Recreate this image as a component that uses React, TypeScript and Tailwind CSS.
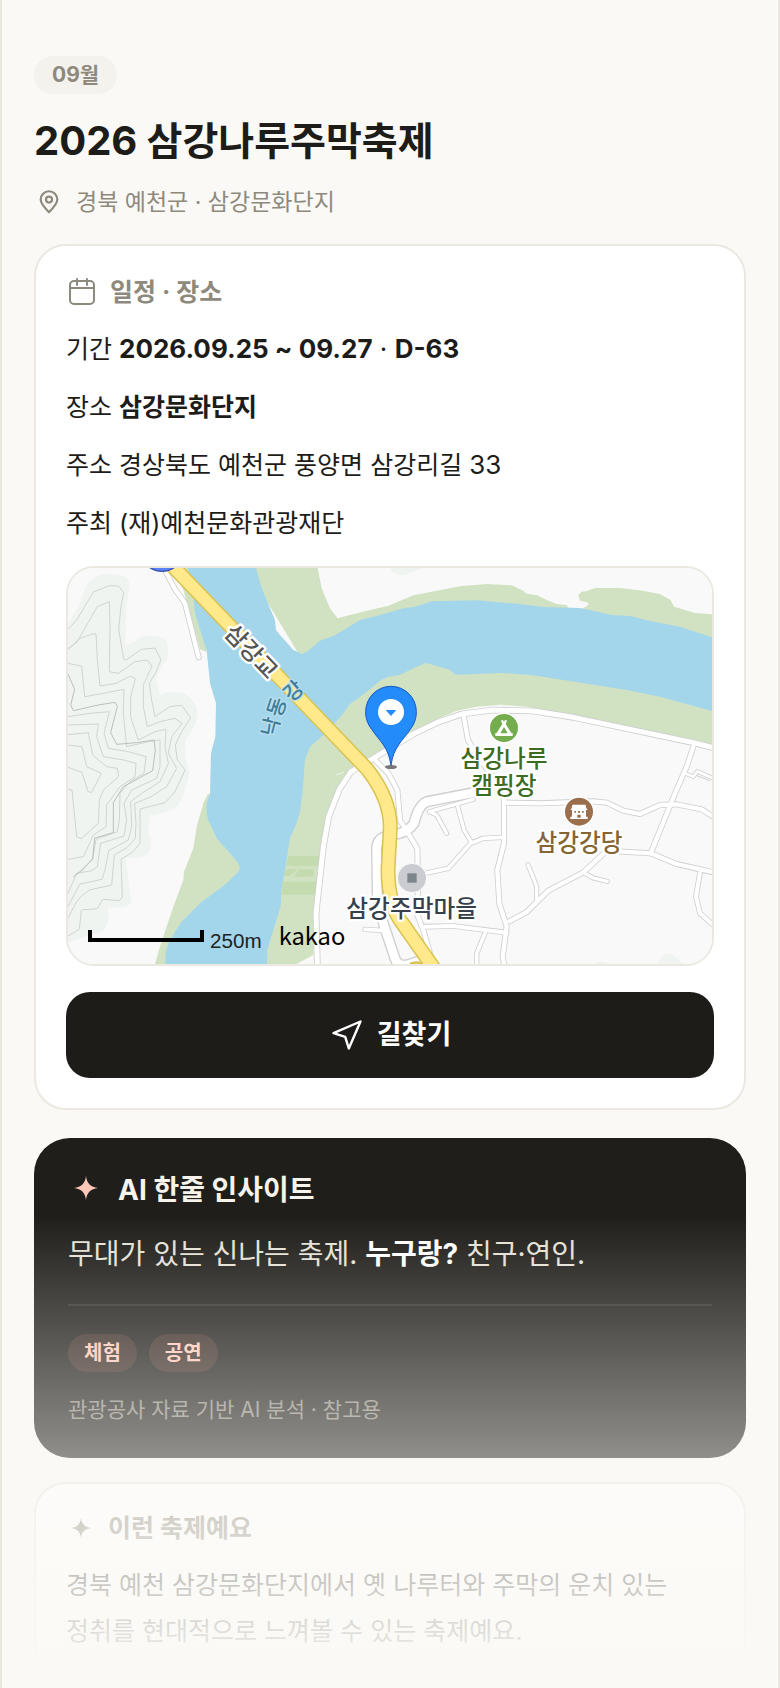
import React from "react";

const GREEN = "#d1e2c2";
const WATER = "#a4d6eb";

const contours = [
  "M24 208 L50 180 L100 96 L148 77 L176 78 L191 98 L183 140 L176 208 L191 297 L198 300 L245 268 L285 264 L303 300 L286 340 L268 370 L275 420 L285 470 L330 440 L365 436 L392 474 L365 515 L346 555 L352 600 L375 630 L345 695 L315 728 L240 747 L240 850 L218 876 L183 898 L187 1012 L178 1022 L128 1018 L112 1046 L64 1050 L58 1108 L24 1128",
  "M24 266 L50 248 L112 140 L148 125 L150 200 L148 335 L175 340 L225 305 L262 300 L276 318 L250 375 L250 440 L262 500 L300 485 L345 475 L366 490 L335 530 L325 580 L350 625 L320 680 L270 712 L224 730 L228 790 L226 835 L202 862 L163 885 L155 975 L88 990 L62 1010 L48 1028 L24 1075",
  "M24 268 L60 235 L98 222 L108 222 L112 300 L120 378 L168 370 L212 348 L226 356 L212 410 L212 470 L235 540 L285 515 L318 508 L315 560 L325 610 L300 665 L245 700 L212 725 L215 800 L205 840 L146 872 L135 930 L126 958 L60 972 L24 1040",
  "M24 310 L65 318 L74 410 L130 400 L192 388 L190 460 L200 560 L265 545 L300 540 L300 620 L290 655 L215 690 L192 730 L200 780 L192 828 L122 850 L112 920 L95 932 L50 940 L24 1000",
  "M24 470 L90 460 L148 455 L132 520 L145 565 L205 575 L258 590 L252 640 L210 665 L180 700 L178 780 L172 815 L108 838 L98 895 L64 935",
  "M24 495 L115 492 L110 530 L130 590 L190 600 L228 610 L225 650 L180 680 L140 735 L138 800 L100 825 L70 890 L24 898",
  "M24 524 L85 518 L98 585 L140 620 L172 625 L176 650 L130 690 L118 720 L115 790 L64 836 L50 830 L36 690 L24 688",
  "M24 555 L66 560 L80 620 L124 640 L95 697 L84 695 L66 637 L24 622",
];

const roads: { d: string; w: number }[] = [
  { d: "M318 36 L345 88 L375 130 L416 292", w: 13 },
  { d: "M772 1212 L768 1060 L790 860 L806 770 L838 688 L872 636 L945 592 L1060 522 L1130 488 L1205 462 L1300 450 L1420 453 L1540 472 L1900 548 L1956 562", w: 15 },
  { d: "M1210 464 L1224 540 L1262 605 L1300 650 L1332 718 L1332 850 L1312 930 L1318 1030 L1340 1100 L1328 1190 L1332 1212", w: 13 },
  { d: "M1332 728 L1440 730 L1600 724 L1640 728 L1690 752 L1740 762 L1800 735 L1850 733 L1925 748 L1956 768", w: 13 },
  { d: "M1900 560 L1880 620 L1845 700 L1772 880", w: 13 },
  { d: "M1348 1084 L1400 1056 L1465 992 L1570 937 L1640 872 L1772 880 L1850 912 L1956 936", w: 13 },
  { d: "M1570 937 L1600 954 L1642 964", w: 10 },
  { d: "M1404 914 L1430 980 L1430 1018", w: 10 },
  { d: "M1920 938 L1908 1010 L1920 1060 L1956 1092", w: 12 },
  { d: "M1875 640 L1900 650 L1912 634 L1956 654", w: 8 },
  { d: "M945 600 L985 640 L1012 690 L1020 780 L1072 865 L1074 1000 L1066 1050 L1090 1110 L1110 1180 L1112 1212", w: 13 },
  { d: "M1095 1100 L1180 1098 L1340 1118", w: 12 },
  { d: "M1275 1120 L1250 1180 L1250 1212", w: 11 },
  { d: "M1085 942 L1165 925 L1232 850 L1270 835 L1325 832", w: 11 },
  { d: "M1240 718 L1108 755 L1130 765 L1160 820", w: 10 },
  { d: "M1192 735 L1212 810 L1235 848", w: 10 },
  { d: "M915 1108 L975 1112", w: 11 },
];

const MapArt = () => (
  <svg
    viewBox="24 24 1932 1188"
    preserveAspectRatio="xMidYMid slice"
    className="block h-full w-full"
    role="img"
    aria-label="삼강문화단지 지도"
    fontFamily='"Noto Sans CJK KR", sans-serif'
  >
    <rect x="0" y="0" width="2000" height="1300" fill="#f9f9f9" />
    <path
      fill="#eff4f1"
      d="M24 190 L60 130 Q75 60 120 45 Q160 36 195 50 Q212 60 208 85 L198 150 L197 255 Q215 252 245 230 Q290 222 318 240 Q330 265 320 300 Q288 340 290 360 L300 405 Q340 388 375 402 Q420 430 411 475 Q400 515 375 540 L375 590 L388 640 Q380 690 355 735 Q340 755 270 768 L265 810 Q280 850 264 880 Q250 898 198 893 L205 960 L214 1025 Q210 1046 145 1042 Q150 1115 110 1120 L70 1130 L24 1150 Z"
    />
    <path fill="#eff4f1" d="M990 24 Q1000 50 1035 44 L1090 24 Z M1790 1212 Q1810 1175 1835 1182 L1870 1212 Z M1605 1212 Q1625 1195 1645 1212 Z" />
    <g fill="none" stroke="#cfd4cf" strokeWidth="3">
      {contours.map((d) => (
        <path key={d} d={d} />
      ))}
    </g>
    <path
      fill="none"
      stroke="#b9c0b8"
      strokeWidth="3"
      d="M24 342 L44 388 L32 435 L40 452 L115 435 L165 427 L172 440 L152 518 L170 553 L230 548 L282 540 L286 570 L278 632 L190 680 L160 728 L160 818 L104 834 L98 898 L60 935 L40 950"
    />
    <path fill={GREEN} d="M340 24 L370 90 L420 268 L440 276 L420 24 Z" />
    <path fill={GREEN} d="M445 700 L430 730 L410 800 L400 865 L372 935 L370 960 L340 1040 L318 1105 L300 1160 L285 1212 H340 L560 930 Z" />
    <path
      fill={GREEN}
      d="M560 24 H773 L785 85 L810 145 L833 175 L870 165 L930 150 L985 137 L1060 106 L1200 79 L1280 72 L1355 76 L1390 92 L1400 101 L1432 106 L1465 122 L1490 132 L1520 135 L1526 145 L1567 147 L1587 133 L1580 127 L1560 122 L1555 105 L1565 95 L1580 94 L1605 84 L1680 84 L1750 92 L1800 103 L1832 120 L1842 140 L1905 159 L1956 163 V250 L1560 200 L1200 180 L727 300 Z"
    />
    <path
      fill={GREEN}
      d="M1956 400 V555 L1890 540 L1540 470 L1400 440 L1320 434 L1250 440 L1190 452 L1130 478 L1060 512 L930 590 L880 625 L840 680 L805 770 L782 900 L770 1020 L760 1185 L710 1212 H600 L700 600 L900 380 L1100 300 Z"
    />
    <path
      fill={WATER}
      d="M383 24 L400 110 L405 160 L440 272 L450 370 L468 430 L466 530 L453 580 L450 700 L440 730 Q436 770 452 795 L470 835 L510 880 L535 910 Q543 922 535 935 L500 970 L420 1030 L362 1088 L330 1140 Q314 1170 316 1212 H621 L622 1170 L640 1110 L663 1035 L664 990 L675 930 L690 835 L710 790 L720 755 L728 690 L735 600 L750 560 L785 530 L820 495 L850 460 L870 432 L915 400 L960 362 L985 350 L1020 345 L1060 325 L1085 315 L1097 308 L1170 330 L1187 344 L1330 339 L1420 346 L1700 390 L1800 410 L1956 453 V232 L1860 200 L1770 183 L1710 168 L1655 165 L1590 150 L1560 144 L1450 141 L1380 132 L1250 121 L1115 124 L1065 140 L1030 145 L960 165 L900 180 L860 205 L820 228 L780 242 L745 272 L727 282 L700 270 L660 225 L648 210 L645 180 L622 125 L605 85 L588 24 Z"
    />
    <g fill="#c4dbaf">
      <path d="M686 888 H784 L780 918 H678 Z" />
      <path d="M676 928 H712 L690 948 H672 Z M718 928 H762 L760 950 H702 Z" />
      <path d="M668 965 H775 L770 1004 H664 Z" />
    </g>
    <path d="M828 645 L852 636" stroke="#eef3e8" strokeWidth="3" />

    <g fill="none" strokeLinecap="round" strokeLinejoin="round" stroke="#cfcfcf">
      {roads.map((r) => (
        <path key={r.d} d={r.d} strokeWidth={r.w + 5} />
      ))}
      <path d="M985 830 Q950 830 950 870 L952 1010 L970 1090 L1005 1195 Q1015 1230 1070 1205 M1012 822 Q1045 815 1062 790 Q1075 735 1100 725 L1240 698" strokeWidth="34" />
    </g>
    <g fill="none" strokeLinecap="round" strokeLinejoin="round" stroke="#ffffff">
      {roads.map((r) => (
        <path key={r.d} d={r.d} strokeWidth={r.w} />
      ))}
      <path d="M985 830 Q950 830 950 870 L952 1010 L970 1090 L1005 1195 Q1015 1230 1070 1205 M1012 822 Q1045 815 1062 790 Q1075 735 1100 725 L1240 698" strokeWidth="26" />
    </g>
    <path d="M1908 646 L1950 662" stroke="#cfcfcf" strokeWidth="3" />
    <path d="M330 10 L922 628 Q990 715 991 800 L984 930 Q985 1040 1030 1094 L1122 1225" fill="none" stroke="#d8c351" strokeWidth="45" />
    <path d="M1050 1212 Q1065 1204 1085 1210" fill="none" stroke="#d8c351" strokeWidth="8" />
    <path d="M330 10 L922 628 Q990 715 991 800 L984 930 Q985 1040 1030 1094 L1122 1225" fill="none" stroke="#ffe98a" strokeWidth="36" />
    <circle cx="306" cy="-30" r="64" fill="#5a84f5" stroke="#3c54b4" strokeWidth="4" />

    <g fill="#555" stroke="#fff" strokeWidth="14" strokeLinejoin="round" paintOrder="stroke" fontSize="70" fontWeight="500" textAnchor="middle">
      <text transform="translate(573 275) rotate(46)" y="24">
        삼강교
      </text>
    </g>
    <g fill="#3f7d97" stroke="#b9dfef" strokeWidth="8" strokeLinejoin="round" paintOrder="stroke" fontSize="62" fontWeight="500" textAnchor="middle">
      <text transform="translate(632 500) rotate(-76)" y="22">낙</text>
      <text transform="translate(650 441) rotate(-72)" y="22">동</text>
      <text transform="translate(700 393) rotate(-42)" y="22">강</text>
    </g>

    <ellipse cx="993" cy="621" rx="18" ry="6" fill="#777" />
    <path
      d="M993 616 C985 560 960 545 935 508 C922 490 917 475 917 455 A76 76 0 0 1 1069 455 C1069 475 1064 490 1051 508 C1026 545 1001 560 993 616 Z"
      fill="#238cfa"
      stroke="#1459c4"
      strokeWidth="3"
    />
    <circle cx="993" cy="456" r="39" fill="#fff" />
    <path d="M977 450 H1009 L993 468 Z" fill="#238cfa" />

    <circle cx="1332" cy="504" r="44" fill="#74ad4e" stroke="#fff" strokeWidth="4" />
    <path
      fill="#fff"
      fillRule="evenodd"
      d="M1323 482 L1328 479 L1332 485 L1336 479 L1341 482 L1337 492 L1354 519 H1358 V528 H1306 V519 H1310 L1327 492 Z M1332 501 L1321 520 H1343 Z"
    />
    <circle cx="1557" cy="755" r="44" fill="#9b6f4c" stroke="#fff" strokeWidth="4" />
    <path
      fill="#fff"
      fillRule="evenodd"
      d="M1537 734 H1577 Q1577 744 1583 750 H1578 V770 H1583 V777 H1531 V770 H1536 V750 H1531 Q1537 744 1537 734 Z M1543 753 V758 H1548 V753 Z M1554 753 V758 H1560 V753 Z M1566 753 V758 H1571 V753 Z M1552 764 V773 H1562 V764 Z"
    />
    <circle cx="1056" cy="954" r="44" fill="#cbccd1" stroke="#fff" strokeWidth="3" />
    <rect x="1042" y="940" width="28" height="28" fill="#7d868c" />

    <g stroke="#fff" strokeWidth="14" strokeLinejoin="round" paintOrder="stroke" fontSize="71" fontWeight="500" textAnchor="middle">
      <text fill="#3c6b22">
        <tspan x="1332" y="622">삼강나루</tspan>
        <tspan x="1332" y="701">캠핑장</tspan>
      </text>
      <text x="1557" y="872" fill="#856633">삼강강당</text>
      <text x="1055" y="1072" fill="#36414b">삼강주막마을</text>
    </g>
    <path d="M90 1110 V1140 H426 V1110" fill="none" stroke="#000" strokeWidth="12" />
    <text x="450" y="1163" fontSize="62" fill="#222" fontFamily='"Liberation Sans", sans-serif'>
      250m
    </text>
    <text x="656" y="1156" fontSize="71" fill="#000" fontWeight="400">
      kakao
    </text>
  </svg>
);

const Sparkle = ({ className }: { className: string }) => (
  <svg viewBox="0 0 24 24" className={className} fill="currentColor" aria-hidden="true">
    <path d="M12 0 C13 7.5 16.5 11 24 12 C16.5 13 13 16.5 12 24 C11 16.5 7.5 13 0 12 C7.5 11 11 7.5 12 0 Z" />
  </svg>
);

const PinIcon = () => (
  <svg viewBox="0 0 24 24" className="h-[26px] w-[30px] shrink-0" fill="none" stroke="currentColor" strokeWidth="2" strokeLinejoin="round" aria-hidden="true">
    <path d="M12 21.5 C8 17.5 4.3 13.8 4.3 9.8 A7.7 7.7 0 0 1 19.7 9.8 C19.7 13.8 16 17.5 12 21.5 Z" />
    <circle cx="12" cy="9.8" r="2.8" />
  </svg>
);

const CalendarIcon = () => (
  <svg viewBox="0 0 32 32" className="size-8 shrink-0" fill="none" stroke="currentColor" strokeWidth="2" strokeLinecap="round" aria-hidden="true">
    <rect x="4" y="5" width="24" height="23" rx="4" />
    <path d="M4 12 H28 M11 3 V9 M21 3 V9" />
  </svg>
);

const RouteIcon = () => (
  <svg viewBox="0 0 24 24" className="size-9 shrink-0" fill="none" stroke="currentColor" strokeWidth="1.6" strokeLinecap="round" strokeLinejoin="round" aria-hidden="true">
    <path d="M3 10.8 L21 3 L13.2 21 L10.8 13.2 Z" />
  </svg>
);

const tags = ["체험", "공연"];

export default function App() {
  return (
    <main className="relative min-h-screen overflow-hidden border-x-2 border-[#e9e7e0] bg-[#faf9f5] px-8 pt-14 font-['Inter','Noto_Sans_CJK_KR',sans-serif] text-[25px] text-[#1d1c18]">
      <header>
        <span className="inline-flex h-[38px] items-center rounded-full bg-[#f3f2ed] px-[18px] text-[21px] font-bold text-[#8e897d] align-top">
          09월
        </span>
        <h1 className="mt-5 text-[39px] leading-[54px] font-bold">
          <span className="text-[40px] leading-none">2026</span> 삼강나루주막축제
        </h1>
        <p className="mt-4 flex items-center gap-3 text-[23px] leading-9 text-[#8e897d]">
          <PinIcon />
          경북 예천군 · 삼강문화단지
        </p>
      </header>

      <section className="mt-6 rounded-[32px] border-2 border-[#ebe8e1] bg-white p-[30px]">
        <h2 className="flex items-center gap-3 leading-8 font-bold text-[#8e897d]">
          <CalendarIcon />
          일정 · 장소
        </h2>
        <div className="mt-5 flex flex-col gap-4 leading-[42px]">
          <p>
            기간{" "}
            <span className="text-[26px] leading-none">
              <strong className="font-bold">2026.09.25 ~ 09.27</strong> · <strong className="font-bold">D-63</strong>
            </span>
          </p>
          <p>
            장소 <strong className="font-bold">삼강문화단지</strong>
          </p>
          <p>
            주소 경상북도 예천군 풍양면 삼강리길 <span className="text-[26px] leading-none">33</span>
          </p>
          <p>주최 (재)예천문화관광재단</p>
        </div>
        <div className="mt-[22px] h-[400px] overflow-hidden rounded-[28px] border-2 border-[#ebe8e1]">
          <MapArt />
        </div>
        <button
          type="button"
          className="mt-[26px] flex h-[86px] w-full items-center justify-center gap-3 rounded-3xl bg-[#1d1c18] text-[27px] font-bold text-white"
        >
          <RouteIcon />
          길찾기
        </button>
      </section>

      <section className="mt-7 rounded-[36px] bg-[#1f1e1a] px-[34px] pt-8 pb-[30px]">
        <h2 className="flex items-center gap-[14px] text-[28px] leading-10 font-bold text-[#f5f3ec]">
          <span className="flex w-9 justify-center pb-1 text-[#ffc8b8]">
            <Sparkle className="size-6" />
          </span>
          AI 한줄 인사이트
        </h2>
        <p className="mt-4 text-[28px] leading-[56px] text-[#e6e1d5]">
          무대가 있는 신나는 축제. <strong className="font-bold text-white">누구랑?</strong> 친구·연인.
        </p>
        <hr className="mt-[22px] border-t-2 border-white/8" />
        <ul className="mt-7 flex gap-3 text-xl">
          {tags.map((tag) => (
            <li key={tag} className="flex h-[38px] items-center rounded-full bg-[#ff8c70]/12 px-4 font-bold text-[#ffc8b8]">
              {tag}
            </li>
          ))}
        </ul>
        <p className="mt-5 text-[21px] leading-9 text-[#8e897d]">관광공사 자료 기반 AI 분석 · 참고용</p>
      </section>

      <section className="mt-6 rounded-[32px] border-2 border-[#ebe8e1] bg-white px-[30px] pt-[26px] pb-5">
        <h2 className="flex items-center gap-3 leading-9 font-bold text-[#8e897d]">
          <span className="flex w-[30px] justify-center">
            <Sparkle className="size-5" />
          </span>
          이런 축제예요
        </h2>
        <p className="mt-4 leading-[46px] break-keep">
          경북 예천 삼강문화단지에서 옛 나루터와 주막의 운치 있는 정취를 현대적으로 느껴볼 수 있는 축제예요.
        </p>
      </section>

      <div className="pointer-events-none absolute inset-x-0 bottom-0 h-[28%] bg-linear-to-b from-[#faf9f5]/0 to-[#faf9f5]" />
    </main>
  );
}
